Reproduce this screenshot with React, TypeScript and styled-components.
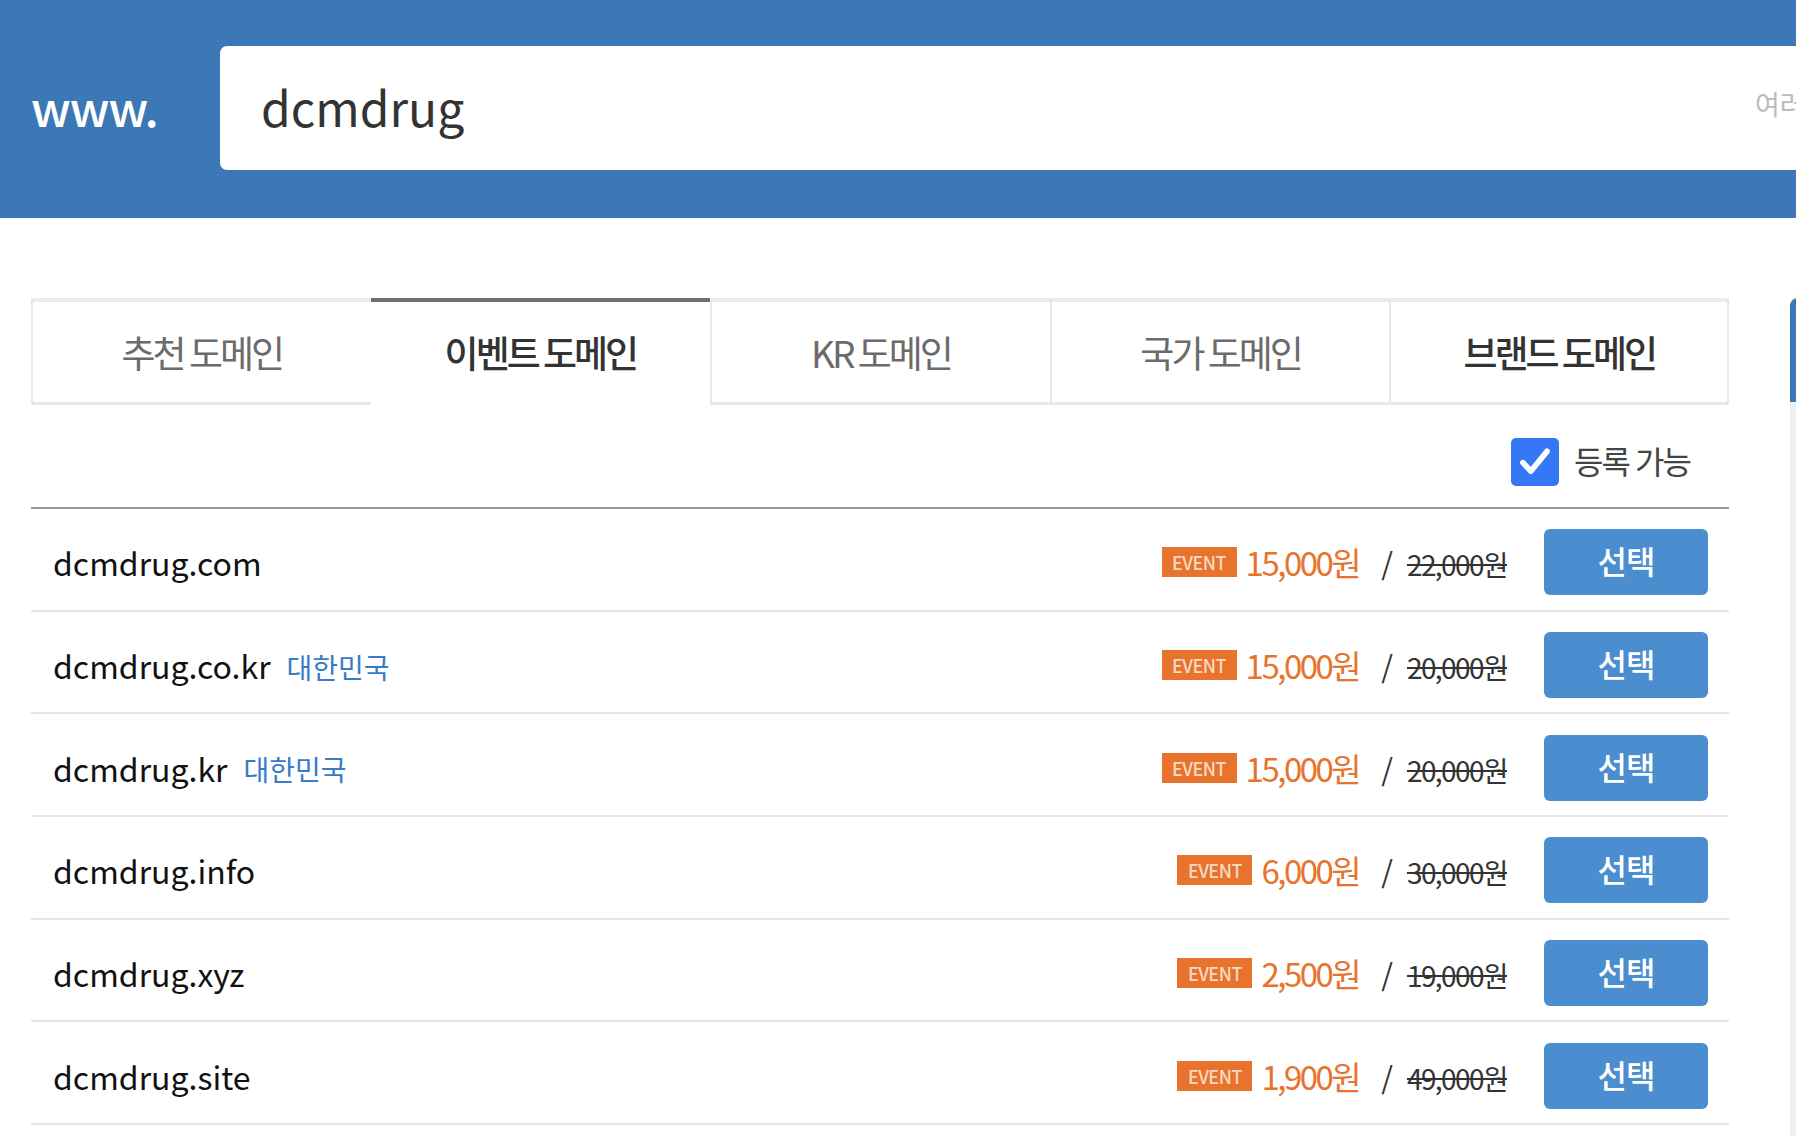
import React from 'react';
import styled, { createGlobalStyle } from 'styled-components';

const GlobalStyle = createGlobalStyle`
  html, body {
    margin: 0;
    padding: 0;
    background: #fff;
    overflow: hidden;
  }
  body {
    font-family: 'Noto Sans CJK KR', 'Noto Sans', sans-serif;
    color: #222;
  }
  * {
    box-sizing: border-box;
  }
`;

const Header = styled.header`
  height: 218px;
  background: #3c78b5;
  display: flex;
  align-items: center;
  padding-left: 31px;
  overflow: hidden;
`;

const Prefix = styled.div`
  width: 189px;
  flex-shrink: 0;
  color: #fff;
  font-size: 48px;
  font-weight: 500;
  letter-spacing: -1px;
  margin-top: -7px;
`;

const SearchBox = styled.div`
  flex-shrink: 0;
  width: 1800px;
  height: 124px;
  margin-top: -2px;
  background: #fff;
  border-radius: 7px;
  display: flex;
  align-items: center;
  padding-left: 41px;
`;

const Query = styled.span`
  flex: 1;
  font-size: 48px;
  color: #333;
  margin-top: -4px;
`;

const Hint = styled.span`
  width: 265px;
  flex-shrink: 0;
  white-space: nowrap;
  overflow: hidden;
  font-size: 27px;
  color: #bbb;
  margin-top: -10px;
`;

const Body = styled.div`
  display: flex;
  gap: 61px;
  padding: 80px 0 0 31px;
`;

const Main = styled.main`
  width: 1698px;
  flex-shrink: 0;
`;

const Aside = styled.aside`
  width: 320px;
  flex-shrink: 0;
  height: 900px;
  background: #eff0f4;
  border-top-left-radius: 8px;
  overflow: hidden;
`;

const AsideHead = styled.div`
  height: 104px;
  background: #3c78b5;
`;

const TabList = styled.div`
  display: grid;
  grid-template-columns: repeat(5, 1fr);
  height: 107px;
`;

const Tab = styled.div<{ $active?: boolean; $strong?: boolean; $last?: boolean }>`
  display: flex;
  align-items: center;
  justify-content: center;
  border-top: 4px solid ${(p) => (p.$active ? '#707070' : '#ebebeb')};
  border-bottom: 3px solid ${(p) => (p.$active ? 'transparent' : '#e8e8e8')};
  border-left: ${(p) => (p.$active ? '0' : '2px solid #e8e8e8')};
  border-right: ${(p) => (p.$last ? '2px solid #e8e8e8' : '0')};
  font-size: 37px;
  letter-spacing: -3px;
  color: ${(p) => (p.$active || p.$strong ? '#333' : '#6b6b6b')};
  font-weight: ${(p) => (p.$active || p.$strong ? 500 : 400)};
`;

const FilterRow = styled.div`
  display: flex;
  justify-content: flex-end;
  align-items: center;
  gap: 15px;
  padding: 33px 39px 21px 0;
  border-bottom: 2px solid #9a9a9a;
`;

const CheckBox = styled.span`
  width: 48px;
  height: 48px;
  border-radius: 5px;
  background: #3478f6;
  display: flex;
  align-items: center;
  justify-content: center;
`;

const FilterLabel = styled.span`
  font-size: 32px;
  letter-spacing: -2px;
  word-spacing: 1px;
  color: #444;
  margin-top: -4px;
`;

const Row = styled.div`
  height: 102.7px;
  display: flex;
  align-items: center;
  padding: 6px 21px 0 22px;
  border-bottom: 2px solid #e6e6e6;
`;

const DomainName = styled.span`
  font-size: 32px;
  color: #111;
`;

const CountryTag = styled.span`
  font-size: 28px;
  color: #3a7bc8;
  margin-left: 16px;
  margin-top: 3px;
`;

const PriceGroup = styled.div`
  margin-left: auto;
  display: flex;
  align-items: center;
`;

const EventBadge = styled.span`
  width: 75px;
  height: 30px;
  background: #e8732d;
  color: #fbd9c2;
  font-size: 18px;
  font-weight: 500;
  letter-spacing: -0.5px;
  display: flex;
  align-items: center;
  justify-content: center;
  margin-right: 9px;
`;

const SalePrice = styled.span`
  font-size: 33px;
  letter-spacing: -2.5px;
  color: #e8732d;
`;

const Slash = styled.span`
  font-size: 30px;
  color: #333;
  margin: 0 14px 0 22px;
`;

const OriginalPrice = styled.span`
  font-size: 28px;
  letter-spacing: -1.6px;
  color: #333;
  text-decoration: line-through;
  text-decoration-thickness: 2px;
  margin-top: 4px;
`;

const SelectButton = styled.button`
  width: 164px;
  height: 66px;
  margin-left: 37px;
  border: 0;
  border-radius: 6px;
  background: #4a8ed0;
  color: #fff;
  font-family: inherit;
  font-size: 32px;
  font-weight: 500;
  letter-spacing: -1px;
  padding: 0 0 4px;
`;

interface DomainRow {
  name: string;
  tag?: string;
  price: string;
  original: string;
}

const tabs = ['추천 도메인', '이벤트 도메인', 'KR 도메인', '국가 도메인', '브랜드 도메인'];

const rows: DomainRow[] = [
  { name: 'dcmdrug.com', price: '15,000원', original: '22,000원' },
  { name: 'dcmdrug.co.kr', tag: '대한민국', price: '15,000원', original: '20,000원' },
  { name: 'dcmdrug.kr', tag: '대한민국', price: '15,000원', original: '20,000원' },
  { name: 'dcmdrug.info', price: '6,000원', original: '30,000원' },
  { name: 'dcmdrug.xyz', price: '2,500원', original: '19,000원' },
  { name: 'dcmdrug.site', price: '1,900원', original: '49,000원' },
];

const App = () => {
  return (
    <>
      <GlobalStyle />
      <Header>
        <Prefix>www.</Prefix>
        <SearchBox>
          <Query>dcmdrug</Query>
          <Hint>여러 도메인을 한번에 검색하세요</Hint>
        </SearchBox>
      </Header>
      <Body>
        <Main>
          <TabList>
            {tabs.map((t, i) => (
              <Tab key={t} $active={i === 1} $strong={i === 4} $last={i === tabs.length - 1}>
                {t}
              </Tab>
            ))}
          </TabList>
          <FilterRow>
            <CheckBox>
              <svg width="34" height="34" viewBox="0 0 24 24">
                <path d="M3.5 12.5l5.5 6L20.5 4.5" fill="none" stroke="#fff" strokeWidth="4" strokeLinecap="round" strokeLinejoin="round" />
              </svg>
            </CheckBox>
            <FilterLabel>등록 가능</FilterLabel>
          </FilterRow>
          {rows.map((r) => (
            <Row key={r.name}>
              <DomainName>{r.name}</DomainName>
              {r.tag && <CountryTag>{r.tag}</CountryTag>}
              <PriceGroup>
                <EventBadge>EVENT</EventBadge>
                <SalePrice>{r.price}</SalePrice>
                <Slash>/</Slash>
                <OriginalPrice>{r.original}</OriginalPrice>
              </PriceGroup>
              <SelectButton>선택</SelectButton>
            </Row>
          ))}
        </Main>
        <Aside>
          <AsideHead />
        </Aside>
      </Body>
    </>
  );
};

export default App;
